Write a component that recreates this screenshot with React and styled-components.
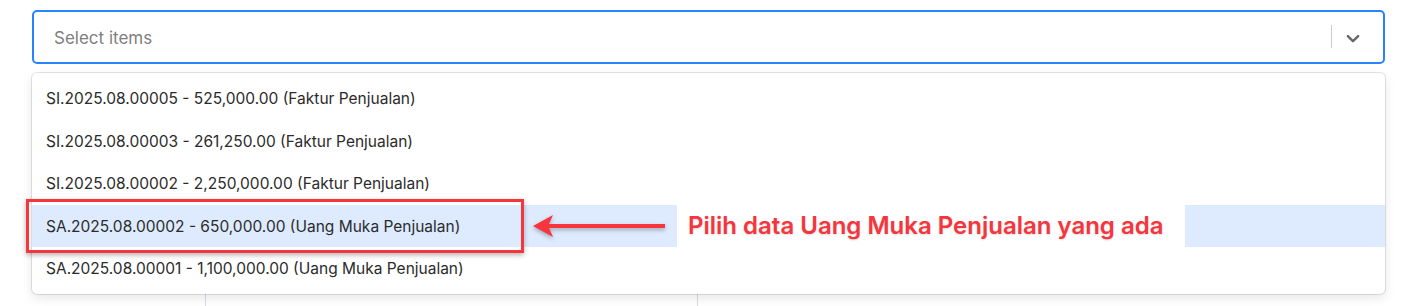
import styled, { createGlobalStyle } from 'styled-components';

const GlobalStyle = createGlobalStyle`
  * { box-sizing: border-box; }
  body {
    margin: 0;
    background: #fff;
    font-family: Inter, "Noto Sans", sans-serif;
    color: #222;
  }
`;

const Page = styled.div`
  padding: 10px 21px 0 32px;
  height: 306px;
  overflow: hidden;
`;

const Field = styled.div`
  position: relative;
`;

const Control = styled.div`
  display: flex;
  align-items: stretch;
  height: 54px;
  border: 2px solid #2684ff;
  border-radius: 5px;
  background: #fff;
`;

const ValueBox = styled.div`
  flex: 1;
  display: flex;
  align-items: center;
  padding: 2px 20px 0;
`;

const Placeholder = styled.span`
  font-size: 17px;
  color: #808080;
`;

const Separator = styled.span`
  width: 1px;
  margin: 13px 0 14px;
  background: #ccc;
`;

const Indicator = styled.div`
  display: flex;
  align-items: center;
  padding: 1px 19px 0 10px;
  color: #666;
`;

const Menu = styled.div`
  position: absolute;
  top: calc(100% + 9px);
  left: 0;
  right: 0;
  z-index: 2;
  padding: 4px 0;
  background: #fff;
  border-radius: 5px;
  box-shadow: 0 0 0 1px rgba(0, 0, 0, 0.1), 0 4px 11px rgba(0, 0, 0, 0.1);
`;

const Option = styled.div`
  position: relative;
  display: flex;
  align-items: center;
  height: 42.5px;
  padding: 1px 14px 0;
  font-size: 15.5px;
  color: #2b2b2b;
  background: ${(p) => (p.$focused ? '#deebff' : 'transparent')};
`;

const Highlight = styled.div`
  position: absolute;
  left: -6px;
  top: -6px;
  width: 498px;
  height: 54px;
  border: 3px solid #f7353d;
  box-shadow: 0 2px 5px rgba(0, 0, 0, 0.3);
  pointer-events: none;
`;

const Arrow = styled.svg`
  position: absolute;
  left: 500px;
  top: 50%;
  transform: translateY(-50%);
  filter: drop-shadow(0 2px 2px rgba(0, 0, 0, 0.3));
`;

const Label = styled.div`
  position: absolute;
  left: 645px;
  top: 0;
  width: 508px;
  height: 100%;
  display: flex;
  align-items: center;
  padding-left: 11px;
  background: #fff;
  font-size: 24px;
  font-weight: 600;
  color: #f7353d;
  text-shadow: 0 1px 2px rgba(0, 0, 0, 0.15);
`;

const Table = styled.div`
  display: grid;
  grid-template-columns: 173px 492px 1fr;
  margin-top: 226px;
  height: 40px;
  border-top: 1px solid #d8dde6;
`;

const Cell = styled.div`
  border-left: ${(p) => (p.$first ? 'none' : '1px solid #d5dce8')};
`;

const ChevronDown = () => (
  <svg width="22" height="22" viewBox="0 0 20 20" fill="currentColor" aria-hidden="true">
    <path d="M4.516 7.548c0.436-0.446 1.043-0.481 1.576 0l3.908 3.747 3.908-3.747c0.533-0.481 1.141-0.446 1.574 0 0.436 0.445 0.408 1.197 0 1.615-0.406 0.418-4.695 4.502-4.695 4.502-0.217 0.223-0.502 0.335-0.787 0.335s-0.57-0.112-0.789-0.335c0 0-4.287-4.084-4.695-4.502s-0.436-1.17 0-1.615z" />
  </svg>
);

const options = [
  'SI.2025.08.00005 - 525,000.00 (Faktur Penjualan)',
  'SI.2025.08.00003 - 261,250.00 (Faktur Penjualan)',
  'SI.2025.08.00002 - 2,250,000.00 (Faktur Penjualan)',
  'SA.2025.08.00002 - 650,000.00 (Uang Muka Penjualan)',
  'SA.2025.08.00001 - 1,100,000.00 (Uang Muka Penjualan)',
];

export default function App() {
  return (
    <>
      <GlobalStyle />
      <Page>
        <Field>
          <Control>
            <ValueBox>
              <Placeholder>Select items</Placeholder>
            </ValueBox>
            <Separator />
            <Indicator>
              <ChevronDown />
            </Indicator>
          </Control>
          <Menu>
            {options.map((label, i) => (
              <Option key={label} $focused={i === 3}>
                {label}
                {i === 3 && (
                  <>
                    <Highlight />
                    <Arrow width="134" height="24" viewBox="0 0 134 24">
                      <path d="M1 12 L21 1 L17 10 L133 10 L133 14 L17 14 L21 23 Z" fill="#f7353d" />
                    </Arrow>
                    <Label>Pilih data Uang Muka Penjualan yang ada</Label>
                  </>
                )}
              </Option>
            ))}
          </Menu>
        </Field>
        <Table>
          <Cell $first />
          <Cell />
          <Cell />
        </Table>
      </Page>
    </>
  );
}
